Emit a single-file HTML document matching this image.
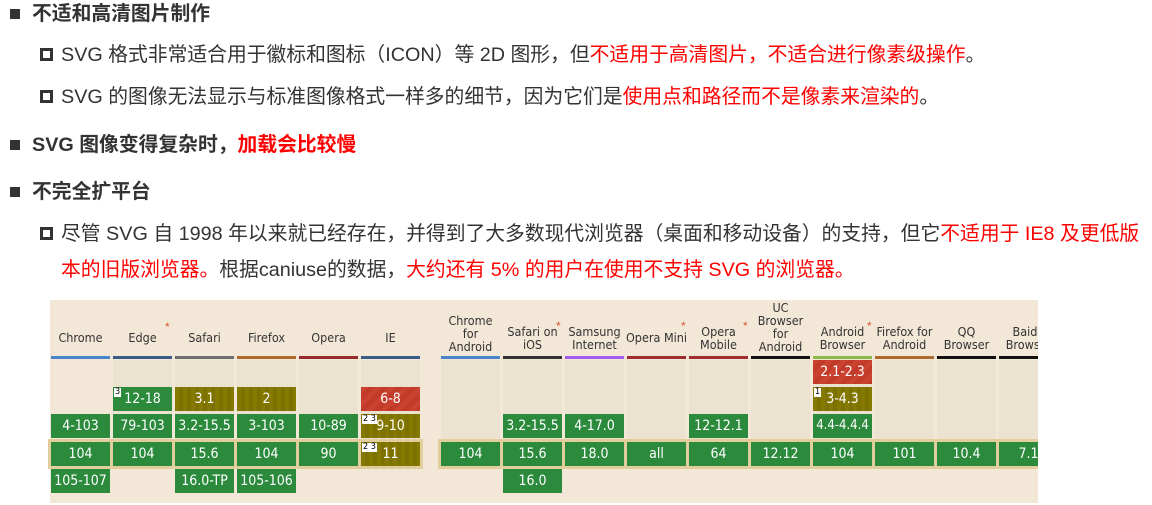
<!DOCTYPE html>
<html><head><meta charset="utf-8"><style>
body{margin:0;width:1152px;height:505px;background:#fff;position:relative;overflow:hidden;font-family:"Liberation Sans","Noto Sans CJK SC",sans-serif;color:#333}
.t{position:absolute;white-space:nowrap;font-size:19.8px;line-height:24px}
.b{font-weight:bold}
.r{color:#f00}
.sq{position:absolute;width:10px;height:10px;background:#333}
.hs{position:absolute;width:7px;height:7px;border:3px solid #333}
.tbl{position:absolute;left:50px;top:300px;width:988px;height:203px;background:#f3e8d7}
.col{position:absolute;top:360px;height:80px;background:#ece2d0}
.hd{position:absolute;font-size:12.5px;line-height:13px;text-align:center;color:#333;font-family:"DejaVu Sans Condensed","Liberation Sans",sans-serif}
.bar{position:absolute;top:356px;height:3px}
.c{position:absolute;height:24px;line-height:24px;text-align:center;color:#fff;font-size:14px;font-family:"DejaVu Sans Condensed","Liberation Sans",sans-serif;letter-spacing:0;white-space:nowrap;overflow:hidden}
.g{background:#2b8a3b}
.o{background:repeating-linear-gradient(90deg,#857900 0 4px,#7d7200 4px 8px)}
.rd{background:repeating-linear-gradient(135deg,#cb4230 0 5px,#c23a2a 5px 10px)}
.n{position:absolute;left:1px;top:1px;background:#fff;color:#000;font-size:9px;line-height:9px;padding:0 1px;letter-spacing:0}
.band{position:absolute;top:439px;height:30px;background:#e2cd9c}
.st{position:absolute;color:#d9552e;font-size:12px}
.clip{position:absolute;left:0;top:0;width:1038px;height:505px;overflow:hidden}
</style></head><body>
<div class="sq" style="left:10px;top:9px"></div>
<div class="t b" style="left:32px;top:2px">不适和高清图片制作</div>
<div class="hs" style="left:40px;top:48px"></div>
<div class="t" style="left:61px;top:43px">SVG 格式非常适合用于徽标和图标（ICON）等 2D 图形，但<span class="r">不适用于高清图片，不适合进行像素级操作</span>。</div>
<div class="hs" style="left:40px;top:90px"></div>
<div class="t" style="left:61px;top:85px">SVG 的图像无法显示与标准图像格式一样多的细节，因为它们是<span class="r">使用点和路径而不是像素来渲染的</span>。</div>
<div class="sq" style="left:10px;top:140px"></div>
<div class="t b" style="left:32px;top:133px">SVG 图像变得复杂时，<span class="r">加载会比较慢</span></div>
<div class="sq" style="left:10px;top:187px"></div>
<div class="t b" style="left:32px;top:180px">不完全扩平台</div>
<div class="hs" style="left:40px;top:227px"></div>
<div class="t" style="left:61px;top:222px">尽管 SVG 自 1998 年以来就已经存在，并得到了大多数现代浏览器（桌面和移动设备）的支持，但它<span class="r">不适用于 IE8 及更低版</span></div>
<div class="t" style="left:61px;top:258px"><span class="r">本的旧版浏览器。</span>根据caniuse的数据，<span class="r">大约还有 5% 的用户在使用不支持 SVG 的浏览器。</span></div>

<div class="clip">
<div class="tbl"></div>
<div class="col" style="left:113px;width:59px"></div><div class="col" style="left:175px;width:59px"></div><div class="col" style="left:237px;width:59px"></div><div class="col" style="left:299px;width:59px"></div><div class="col" style="left:361px;width:59px"></div>
<div class="col" style="left:441px;width:59px"></div><div class="col" style="left:503px;width:59px"></div><div class="col" style="left:565px;width:59px"></div><div class="col" style="left:627px;width:59px"></div><div class="col" style="left:689px;width:59px"></div><div class="col" style="left:751px;width:59px"></div><div class="col" style="left:813px;width:59px"></div><div class="col" style="left:875px;width:59px"></div><div class="col" style="left:937px;width:59px"></div><div class="col" style="left:999px;width:59px"></div>
<div class="band" style="left:48px;width:375px"></div>
<div class="band" style="left:438px;width:620px"></div>

<div class="hd" style="left:51px;width:59px;top:331px">Chrome</div>
<div class="hd" style="left:113px;width:59px;top:331px">Edge</div><div class="st" style="left:165px;top:320px">*</div>
<div class="hd" style="left:175px;width:59px;top:331px">Safari</div>
<div class="hd" style="left:237px;width:59px;top:331px">Firefox</div>
<div class="hd" style="left:299px;width:59px;top:331px">Opera</div>
<div class="hd" style="left:361px;width:59px;top:331px">IE</div>
<div class="hd" style="left:441px;width:59px;top:314px">Chrome<br>for<br>Android</div>
<div class="hd" style="left:503px;width:59px;top:325px">Safari on<br>iOS</div><div class="st" style="left:556px;top:319px">*</div>
<div class="hd" style="left:565px;width:59px;top:325px">Samsung<br>Internet</div>
<div class="hd" style="left:625px;width:63px;top:331px">Opera Mini</div><div class="st" style="left:681px;top:319px">*</div>
<div class="hd" style="left:689px;width:59px;top:325px">Opera<br>Mobile</div><div class="st" style="left:743px;top:319px">*</div>
<div class="hd" style="left:751px;width:59px;top:301px">UC<br>Browser<br>for<br>Android</div>
<div class="hd" style="left:813px;width:59px;top:325px">Android<br>Browser</div><div class="st" style="left:867px;top:319px">*</div>
<div class="hd" style="left:873px;width:63px;top:325px">Firefox for<br>Android</div>
<div class="hd" style="left:937px;width:59px;top:325px">QQ<br>Browser</div>
<div class="hd" style="left:999px;width:59px;top:325px">Baidu<br>Browser</div>

<div class="bar" style="left:51px;width:59px;background:#4a85cc"></div>
<div class="bar" style="left:113px;width:59px;background:#3b5b8a"></div>
<div class="bar" style="left:175px;width:59px;background:#6e6e6e"></div>
<div class="bar" style="left:237px;width:59px;background:#ad6a2e"></div>
<div class="bar" style="left:299px;width:59px;background:#972b2b"></div>
<div class="bar" style="left:361px;width:59px;background:#3b5b8a"></div>
<div class="bar" style="left:441px;width:59px;background:#4a85cc"></div>
<div class="bar" style="left:503px;width:59px;background:#333"></div>
<div class="bar" style="left:565px;width:59px;background:#a05cf0"></div>
<div class="bar" style="left:627px;width:59px;background:#a02d2d"></div>
<div class="bar" style="left:689px;width:59px;background:#a02d2d"></div>
<div class="bar" style="left:751px;width:59px;background:#111"></div>
<div class="bar" style="left:813px;width:59px;background:#8aba4a"></div>
<div class="bar" style="left:875px;width:59px;background:#ad6a2e"></div>
<div class="bar" style="left:937px;width:59px;background:#111"></div>
<div class="bar" style="left:999px;width:59px;background:#111"></div>

<div class="c g" style="left:51px;top:414px;width:59px">4-103</div>
<div class="c g" style="left:51px;top:442px;width:59px">104</div>
<div class="c g" style="left:51px;top:469px;width:59px">105-107</div>

<div class="c g" style="left:113px;top:387px;width:59px"><span class="n">3</span>12-18</div>
<div class="c g" style="left:113px;top:414px;width:59px">79-103</div>
<div class="c g" style="left:113px;top:442px;width:59px">104</div>

<div class="c o" style="left:175px;top:387px;width:59px">3.1</div>
<div class="c g" style="left:175px;top:414px;width:59px">3.2-15.5</div>
<div class="c g" style="left:175px;top:442px;width:59px">15.6</div>
<div class="c g" style="left:175px;top:469px;width:59px">16.0-TP</div>

<div class="c o" style="left:237px;top:387px;width:59px">2</div>
<div class="c g" style="left:237px;top:414px;width:59px">3-103</div>
<div class="c g" style="left:237px;top:442px;width:59px">104</div>
<div class="c g" style="left:237px;top:469px;width:59px">105-106</div>

<div class="c g" style="left:299px;top:414px;width:59px">10-89</div>
<div class="c g" style="left:299px;top:442px;width:59px">90</div>

<div class="c rd" style="left:361px;top:387px;width:59px">6-8</div>
<div class="c o" style="left:361px;top:414px;width:59px"><span class="n">2 3</span>9-10</div>
<div class="c o" style="left:361px;top:442px;width:59px"><span class="n">2 3</span>11</div>

<div class="c g" style="left:441px;top:442px;width:59px">104</div>
<div class="c g" style="left:503px;top:414px;width:59px">3.2-15.5</div>
<div class="c g" style="left:503px;top:442px;width:59px">15.6</div>
<div class="c g" style="left:503px;top:469px;width:59px">16.0</div>
<div class="c g" style="left:565px;top:414px;width:59px">4-17.0</div>
<div class="c g" style="left:565px;top:442px;width:59px">18.0</div>
<div class="c g" style="left:627px;top:442px;width:59px">all</div>
<div class="c g" style="left:689px;top:414px;width:59px">12-12.1</div>
<div class="c g" style="left:689px;top:442px;width:59px">64</div>
<div class="c g" style="left:751px;top:442px;width:59px">12.12</div>
<div class="c rd" style="left:813px;top:360px;width:59px">2.1-2.3</div>
<div class="c o" style="left:813px;top:387px;width:59px"><span class="n">1</span>3-4.3</div>
<div class="c g" style="left:813px;top:414px;width:59px;font-size:13px">4.4-4.4.4</div>
<div class="c g" style="left:813px;top:442px;width:59px">104</div>
<div class="c g" style="left:875px;top:442px;width:59px">101</div>
<div class="c g" style="left:937px;top:442px;width:59px">10.4</div>
<div class="c g" style="left:999px;top:442px;width:59px">7.1</div>
</div>
</body></html>
